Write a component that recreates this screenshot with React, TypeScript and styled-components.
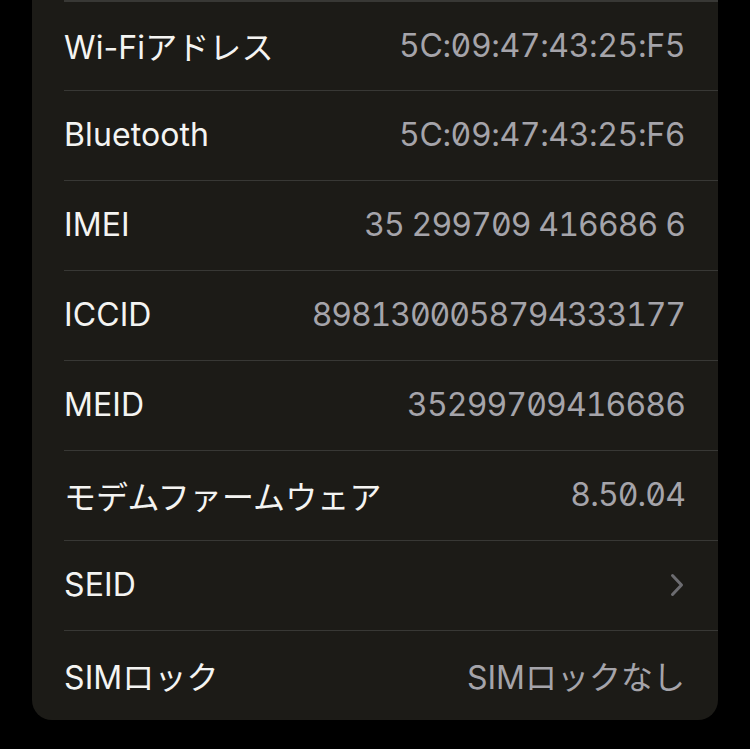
import React from "react";
import styled, { createGlobalStyle } from "styled-components";

const Global = createGlobalStyle`
  html, body { margin: 0; padding: 0; background: #000; }
  body { font-family: Inter, "Noto Sans CJK JP", sans-serif; -webkit-font-smoothing: antialiased; }
`;

const Page = styled.div`
  width: 750px;
  height: 749px;
  background: #000;
  padding: 0 32px 0 32px;
  box-sizing: border-box;
  overflow: hidden;
`;

const Card = styled.div`
  background: #1c1b17;
  border-radius: 0 0 20px 20px;
  padding-left: 32px;
  display: flex;
  flex-direction: column;
`;

const Row = styled.div`
  height: 90px;
  box-sizing: border-box;
  border-top: 1.5px solid #383835;
  display: flex;
  align-items: center;
  justify-content: space-between;
  padding-right: 33px;
  padding-bottom: 2px;
  &:first-child { border-top-width: 2px; }
`;

const Label = styled.span`
  color: #f4f4f2;
  font-size: 32px;
  letter-spacing: 0.1px;
  font-family: Inter, "Noto Sans CJK JP", sans-serif;
  white-space: nowrap;
`;

const Value = styled.span<{ $mono?: boolean; $spacing?: number }>`
  color: #a5a4aa;
  font-size: 32px;
  font-family: Inter, "Noto Sans CJK JP", sans-serif;
  font-feature-settings: ${(p) => (p.$mono ? '"tnum" 1, "zero" 1' : "normal")};
  letter-spacing: ${(p) => (p.$spacing ?? 0)}px;
  white-space: nowrap;
`;

const Chevron = styled.svg`
  width: 14px;
  height: 24px;
  margin-right: 1px;
`;

const rows: { label: string; value?: string; mono?: boolean; spacing?: number; chevron?: boolean }[] = [
  { label: "Wi-Fiアドレス", value: "5C:09:47:43:25:F5", mono: true, spacing: -0.4 },
  { label: "Bluetooth", value: "5C:09:47:43:25:F6", mono: true, spacing: -0.4 },
  { label: "IMEI", value: "35 299709 416686 6", mono: true, spacing: -0.9 },
  { label: "ICCID", value: "8981300058794333177", mono: true, spacing: -1.1 },
  { label: "MEID", value: "35299709416686", mono: true, spacing: -0.9 },
  { label: "モデムファームウェア", value: "8.50.04", mono: true, spacing: -0.9 },
  { label: "SEID", chevron: true },
  { label: "SIMロック", value: "SIMロックなし" },
];

export default function App() {
  return (
    <>
      <Global />
      <Page>
        <Card>
          {rows.map((r) => (
            <Row key={r.label}>
              <Label>{r.label}</Label>
              {r.chevron ? (
                <Chevron viewBox="0 0 14 24">
                  <path d="M2.5 2.5 L11.5 12 L2.5 21.5" fill="none" stroke="#6c6c70" strokeWidth="3" strokeLinecap="round" strokeLinejoin="round" />
                </Chevron>
              ) : (
                <Value $mono={r.mono} $spacing={r.spacing}>{r.value}</Value>
              )}
            </Row>
          ))}
        </Card>
      </Page>
    </>
  );
}
